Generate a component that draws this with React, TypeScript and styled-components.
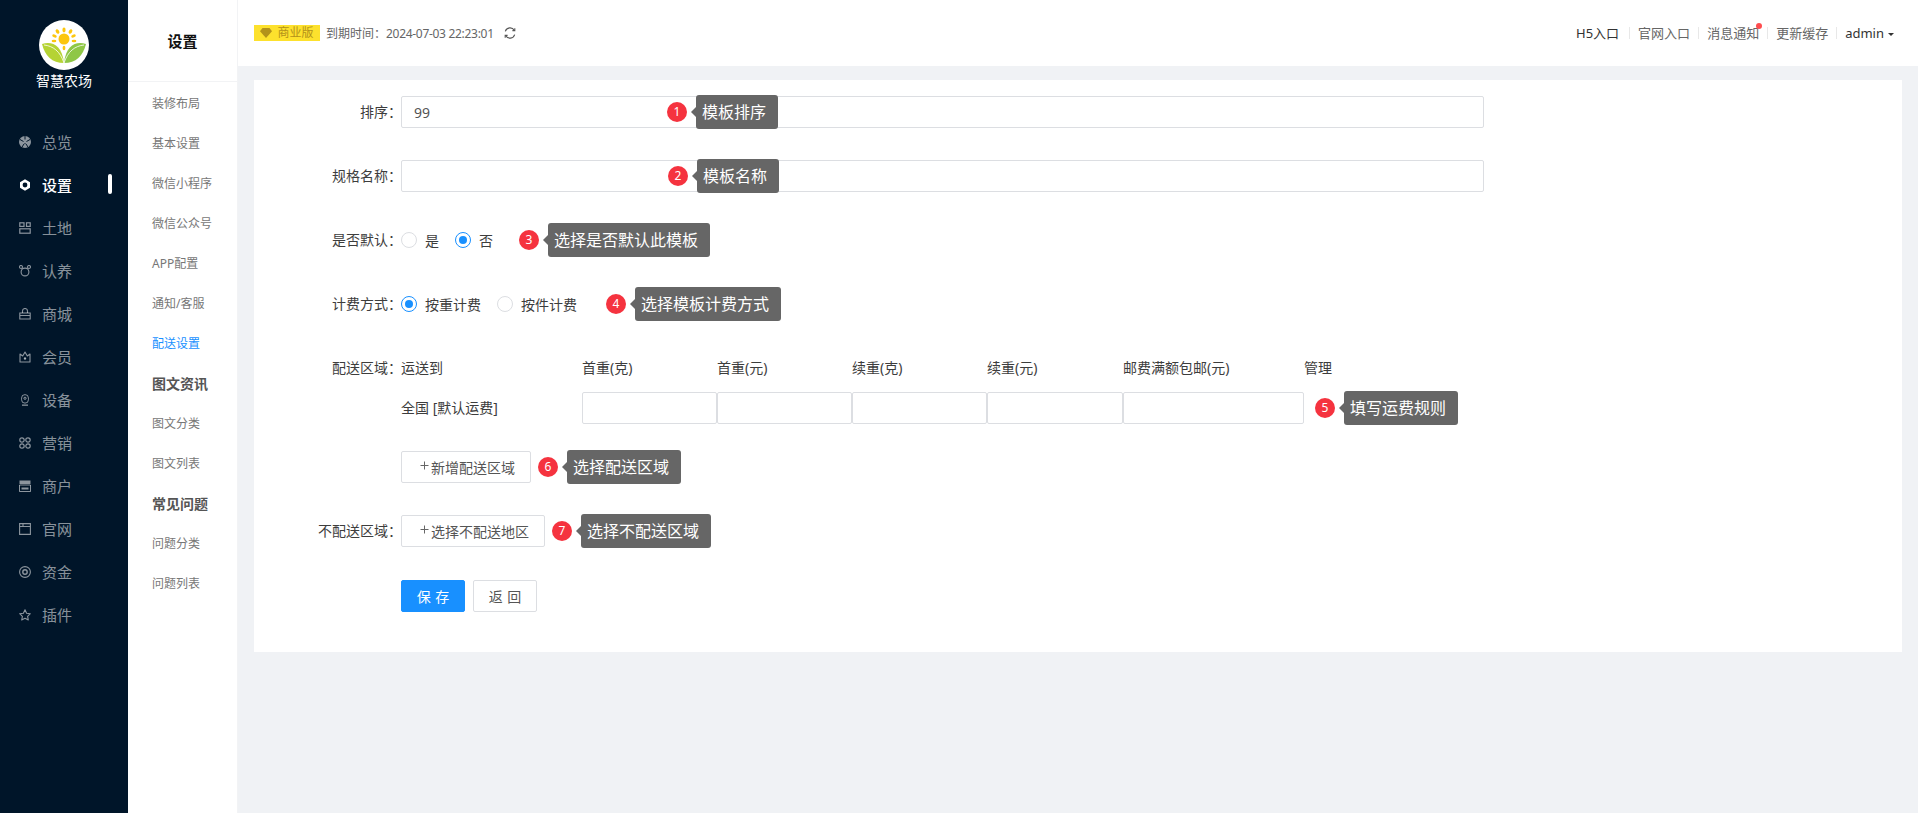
import React from "react";
import styled, { createGlobalStyle } from "styled-components";

const GlobalStyle = createGlobalStyle`
  html, body {
    margin: 0;
    padding: 0;
    height: 100%;
    overflow: hidden;
    background: #f0f2f5;
    font-family: "Noto Sans", "Noto Sans CJK SC", sans-serif;
    font-size: 14px;
    color: #333;
  }
  * {
    box-sizing: border-box;
  }
`;

const Layout = styled.div`
  display: flex;
  width: 1918px;
  height: 813px;
  overflow: hidden;
`;

const Sidebar = styled.aside`
  width: 128px;
  flex: none;
  background: #001529;
`;

const Brand = styled.div`
  display: flex;
  flex-direction: column;
  align-items: center;
  padding-top: 20px;
  height: 120px;
`;

const BrandName = styled.div`
  margin-top: 1px;
  font-size: 14px;
  line-height: 20px;
  color: #fff;
`;

const NavItem = styled.div<{ $active?: boolean }>`
  position: relative;
  display: flex;
  align-items: center;
  gap: 11px;
  height: 43px;
  padding-left: 19px;
  font-size: 15px;
  color: ${(p) => (p.$active ? "#fff" : "rgba(255, 255, 255, 0.55)")};
  font-weight: ${(p) => (p.$active ? 500 : 400)};

  svg {
    width: 12px;
    height: 12px;
    flex: none;
  }

  ${(p) =>
    p.$active &&
    `&::after {
      content: "";
      position: absolute;
      left: 108px;
      top: 11px;
      width: 4px;
      height: 20px;
      border-radius: 2px;
      background: #fff;
    }`}
`;

const SubMenu = styled.aside`
  width: 110px;
  flex: none;
  background: #fff;
  border-right: 1px solid #f2f3f5;
`;

const SubTitle = styled.div`
  height: 82px;
  display: flex;
  align-items: center;
  justify-content: center;
  font-size: 15px;
  font-weight: 700;
  color: #111;
  border-bottom: 1px solid #f2f3f5;
  padding-bottom: 1px;
`;

const SubList = styled.div`
  padding-top: 2px;
`;

const SubItem = styled.div<{ $active?: boolean; $bold?: boolean }>`
  height: 40px;
  line-height: 40px;
  padding-left: 24px;
  font-size: ${(p) => (p.$bold ? "14px" : "12px")};
  font-weight: ${(p) => (p.$bold ? 700 : 400)};
  color: ${(p) => (p.$active ? "#1890ff" : p.$bold ? "#555" : "#777")};
`;

const Main = styled.main`
  flex: 1;
  min-width: 0;
  background: #f0f2f5;
`;

const Header = styled.header`
  height: 66px;
  background: #fff;
  display: flex;
  align-items: center;
  justify-content: space-between;
  padding: 0 24px 0 16px;
`;

const HeaderLeft = styled.div`
  display: flex;
  align-items: center;
  font-size: 12px;
  color: #666;
`;

const PlanTag = styled.span`
  display: inline-flex;
  align-items: center;
  justify-content: center;
  gap: 5px;
  width: 66px;
  height: 16px;
  margin-right: 6px;
  background: #fde12d;
  color: #b3921a;
  font-size: 12px;
  line-height: 16px;

  svg {
    width: 12px;
    height: 10px;
  }
`;

const DateText = styled.span`
  letter-spacing: -0.3px;
`;

const Refresh = styled.svg`
  width: 12px;
  height: 12px;
  margin-left: 10px;
  color: #555;
`;

const HeaderRight = styled.nav`
  display: flex;
  align-items: center;
  font-size: 13px;
  color: #666;
`;

const HeaderLink = styled.span<{ $dark?: boolean; $dot?: boolean }>`
  position: relative;
  line-height: 20px;
  color: ${(p) => (p.$dark ? "#333" : "#666")};

  ${(p) =>
    p.$dot &&
    `&::after {
      content: "";
      position: absolute;
      right: -3px;
      top: 0px;
      width: 6px;
      height: 6px;
      border-radius: 50%;
      background: #ff4d4f;
    }`}
`;

const H5Link = styled(HeaderLink)`
  margin-right: 2px;
`;

const Divider = styled.i`
  display: block;
  width: 1px;
  height: 12px;
  margin: 0 8px;
  background: #e8e8e8;
`;

const Caret = styled.i`
  display: inline-block;
  margin-left: 4px;
  vertical-align: 2px;
  border-style: solid;
  border-width: 3px 3px 0;
  border-color: #333 transparent transparent;
`;

const Card = styled.section`
  margin: 14px 16px 0;
  padding: 16px 0 40px;
  background: #fff;
`;

const FormRow = styled.div<{ $gap?: number }>`
  display: flex;
  align-items: center;
  height: 32px;
  margin-bottom: ${(p) => p.$gap ?? 32}px;
`;

const FeeRow = styled.div`
  display: flex;
  align-items: flex-start;
  margin-bottom: 27px;
`;

const Label = styled.label`
  flex: none;
  width: 148px;
  margin-right: -1px;
  text-align: right;
  font-size: 14px;
  line-height: 20px;
  color: #3d3d3d;
`;

const FeeLabel = styled(Label)`
  padding-top: 6px;
`;

const InputWrap = styled.div`
  position: relative;
  width: 1083px;
`;

const TextInput = styled.div`
  display: flex;
  align-items: center;
  width: 100%;
  height: 32px;
  padding-left: 12px;
  border: 1px solid #dcdee2;
  border-radius: 2px;
  background: #fff;
  font-size: 14px;
  color: #555;
`;

const RadioOption = styled.span`
  display: inline-flex;
  align-items: center;
  gap: 8px;
  margin-right: 16px;
  font-size: 14px;
  color: #3d3d3d;
`;

const RadioDot = styled.i<{ $on?: boolean }>`
  position: relative;
  display: block;
  width: 16px;
  height: 16px;
  border-radius: 50%;
  border: 1px solid ${(p) => (p.$on ? "#1890ff" : "#dcdee2")};
  background: #fff;

  ${(p) =>
    p.$on &&
    `&::after {
      content: "";
      position: absolute;
      left: 3px;
      top: 3px;
      width: 8px;
      height: 8px;
      border-radius: 50%;
      background: #1890ff;
    }`}
`;

const HintWrap = styled.div<{ $left?: number; $over?: number }>`
  display: flex;
  align-items: center;
  gap: 9px;
  margin-left: ${(p) => p.$left ?? 0}px;

  ${(p) =>
    p.$over !== undefined &&
    `position: absolute;
     left: ${p.$over}px;
     top: -1px;
     margin-left: 0;`}
`;

const HintBadge = styled.span`
  width: 20px;
  height: 20px;
  flex: none;
  display: flex;
  align-items: center;
  justify-content: center;
  border-radius: 50%;
  background: #f5333f;
  color: #fff;
  font-size: 12px;
  line-height: 20px;
`;

const HintBubble = styled.span`
  position: relative;
  height: 34px;
  padding: 0 12px 0 6px;
  border-radius: 3px;
  background: #666;
  color: #fff;
  font-size: 16px;
  line-height: 34px;
  white-space: nowrap;

  &::before {
    content: "";
    position: absolute;
    left: -5px;
    top: 12px;
    border-style: solid;
    border-width: 5px 5px 5px 0;
    border-color: transparent #666 transparent transparent;
  }
`;

const FeeTable = styled.div`
  flex: 1;
`;

const FeeHead = styled.div`
  display: flex;
  align-items: center;
  height: 32px;
  margin-bottom: 8px;
`;

const FeeBody = styled.div`
  display: flex;
  align-items: center;
  height: 32px;
`;

const FeeCell = styled.div<{ $w: number }>`
  flex: none;
  width: ${(p) => p.$w}px;
  font-size: 14px;
  line-height: 20px;
  color: #3d3d3d;
`;

const FeeInput = styled.div<{ $w: number }>`
  flex: none;
  width: ${(p) => p.$w}px;
  height: 32px;
  border: 1px solid #dcdee2;
  border-radius: 2px;
  background: #fff;
`;

const Controls = styled.div<{ $gap?: number }>`
  display: flex;
  align-items: center;
  height: 32px;
  padding-left: 147px;
  margin-bottom: ${(p) => p.$gap ?? 0}px;
`;

const OutlineButton = styled.button`
  display: inline-flex;
  align-items: center;
  justify-content: center;
  height: 32px;
  padding: 0 15px 0 18px;
  border: 1px solid #dcdee2;
  border-radius: 2px;
  background: #fff;
  font: inherit;
  font-size: 14px;
  word-spacing: 1px;
  color: #555;
`;

const PrimaryButton = styled(OutlineButton)`
  width: 64px;
  padding: 0;
  border-color: #1890ff;
  background: #1890ff;
  color: #fff;
  margin-right: 8px;
`;

const PlainButton = styled(OutlineButton)`
  width: 64px;
  padding: 0;
`;

const Plus = styled.svg`
  width: 9px;
  height: 9px;
  margin: -3px 2px 0 0;
  color: #666;
`;

const icons: Record<string, React.ReactNode> = {
  overview: (
    <svg viewBox="0 0 12 12">
      <circle cx="6" cy="6" r="6" fill="currentColor" />
      <path d="M1 3.5l3.5 2M11 3.5l-3.5 2M6 0v3.5M3 11l2-3M9 11l-2-3M6 7v1" stroke="#001529" strokeWidth="1" />
    </svg>
  ),
  settings: (
    <svg viewBox="0 0 12 12">
      <path d="M6 0.300l5 2.850v5.700L6 11.700 1 8.850V3.150z" fill="currentColor" />
      <circle cx="6" cy="6" r="2.400" fill="#001529" />
    </svg>
  ),
  land: (
    <svg viewBox="0 0 12 12" fill="none" stroke="currentColor" strokeWidth="1.200">
      <rect x="0.800" y="0.800" width="4.200" height="3.600" />
      <rect x="7.500" y="0.800" width="3.700" height="3.600" />
      <rect x="0.800" y="6.800" width="10.400" height="4.400" />
    </svg>
  ),
  adopt: (
    <svg viewBox="0 0 12 12" fill="none" stroke="currentColor" strokeWidth="1.100">
      <circle cx="6" cy="7" r="3.900" />
      <circle cx="2" cy="2" r="1.500" />
      <circle cx="10" cy="2" r="1.500" />
    </svg>
  ),
  shop: (
    <svg viewBox="0 0 12 12" fill="none" stroke="currentColor" strokeWidth="1.100">
      <path d="M3.500 5V3a2.500 2.500 0 0 1 5 0v2" />
      <path d="M0.800 5h10.400v6H0.800zM0.800 7.500h10.400" />
    </svg>
  ),
  member: (
    <svg viewBox="0 0 12 12" fill="none" stroke="currentColor" strokeWidth="1.100" strokeLinejoin="round">
      <path d="M1 3l2.700 2L6 1l2.300 4L11 3v8H1z" />
      <circle cx="6" cy="7.500" r="0.700" fill="currentColor" />
    </svg>
  ),
  device: (
    <svg viewBox="0 0 12 14" fill="none" stroke="currentColor" strokeWidth="1.100">
      <rect x="2" y="0.700" width="8" height="10" rx="4" />
      <circle cx="6" cy="5" r="1.300" />
      <path d="M2.500 13h7" strokeWidth="1.500" />
    </svg>
  ),
  market: (
    <svg viewBox="0 0 12 12" fill="none" stroke="currentColor" strokeWidth="1.200">
      <circle cx="3" cy="3" r="2.200" />
      <circle cx="9" cy="3" r="2.200" />
      <circle cx="3" cy="9" r="2.200" />
      <circle cx="9" cy="9" r="2.200" />
    </svg>
  ),
  merchant: (
    <svg viewBox="0 0 12 12">
      <path d="M0.500 0.500h11v3.500h-11z" fill="currentColor" />
      <path d="M0.500 5h11v6.500h-11z" fill="none" stroke="currentColor" />
      <path d="M2.500 7.500h7v2h-7z" fill="currentColor" />
    </svg>
  ),
  website: (
    <svg viewBox="0 0 12 12" fill="none" stroke="currentColor" strokeWidth="1.100">
      <path d="M0.600 0.600h10.800v10.800H0.600zM0.600 3.500h10.800M4 0.600v2.900" />
    </svg>
  ),
  funds: (
    <svg viewBox="0 0 12 12" fill="none" stroke="currentColor" strokeWidth="1.100">
      <circle cx="6" cy="6" r="5.400" />
      <circle cx="6" cy="6" r="2.200" strokeWidth="1.400" />
    </svg>
  ),
  plugin: (
    <svg viewBox="0 0 12 12" fill="none" stroke="currentColor" strokeWidth="1.100" strokeLinejoin="round">
      <path d="M6 0.800l1.600 3.400 3.700.5-2.700 2.600.7 3.700L6 9.200l-3.300 1.800.7-3.700L.7 4.700l3.700-.5z" />
    </svg>
  ),
};

const navItems = [
  { key: "overview", label: "总览" },
  { key: "settings", label: "设置", active: true },
  { key: "land", label: "土地" },
  { key: "adopt", label: "认养" },
  { key: "shop", label: "商城" },
  { key: "member", label: "会员" },
  { key: "device", label: "设备" },
  { key: "market", label: "营销" },
  { key: "merchant", label: "商户" },
  { key: "website", label: "官网" },
  { key: "funds", label: "资金" },
  { key: "plugin", label: "插件" },
];

const subItems = [
  { label: "装修布局" },
  { label: "基本设置" },
  { label: "微信小程序" },
  { label: "微信公众号" },
  { label: "APP配置" },
  { label: "通知/客服" },
  { label: "配送设置", active: true },
  { label: "图文资讯", bold: true },
  { label: "图文分类" },
  { label: "图文列表" },
  { label: "常见问题", bold: true },
  { label: "问题分类" },
  { label: "问题列表" },
];

const feeColumns = [
  { title: "首重(克)", width: 135 },
  { title: "首重(元)", width: 135 },
  { title: "续重(克)", width: 135 },
  { title: "续重(元)", width: 136 },
  { title: "邮费满额包邮(元)", width: 181 },
];

const Logo = () => (
  <svg width="50" height="50" viewBox="0 0 50 50">
    <circle cx="25" cy="25" r="25" fill="#fff" />
    <g fill="#fcc60d">
      <circle cx="25" cy="19" r="5.500" />
      <ellipse cx="25" cy="10" rx="1.600" ry="2.400" />
      <ellipse cx="18.500" cy="11.500" rx="1.600" ry="2.400" transform="rotate(-35 18.500 11.500)" />
      <ellipse cx="31.500" cy="11.500" rx="1.600" ry="2.400" transform="rotate(35 31.500 11.500)" />
      <ellipse cx="15.500" cy="16" rx="1.500" ry="2.400" transform="rotate(-65 15.500 16)" />
      <ellipse cx="34.500" cy="16" rx="1.500" ry="2.400" transform="rotate(65 34.500 16)" />
      <ellipse cx="15" cy="21" rx="1.300" ry="2.400" transform="rotate(-90 15 21)" />
      <ellipse cx="35" cy="21" rx="1.300" ry="2.400" transform="rotate(90 35 21)" />
      <ellipse cx="25" cy="28" rx="1.400" ry="2.200" />
    </g>
    <path d="M3 24c10-3 20 1 22 19C13 43 6 36 3 24z" fill="#b5d334" />
    <path d="M47 24c-10-3-20 1-22 19 12 0 19-7 22-19z" fill="#8fc746" />
    <path d="M5 25c9 1 16 6 20 18" fill="none" stroke="#fff" strokeWidth="0.800" />
    <path d="M45 25c-9 1-16 6-20 18" fill="none" stroke="#fff" strokeWidth="0.800" />
  </svg>
);

const PlusIcon = () => (
  <Plus viewBox="0 0 9 9" fill="none" stroke="currentColor" strokeWidth="1">
    <path d="M4.500 0.500v8M0.500 4.500h8" />
  </Plus>
);

const Hint = ({ n, text, left, over }: { n: number; text: string; left?: number; over?: number }) => (
  <HintWrap $left={left} $over={over}>
    <HintBadge>{n}</HintBadge>
    <HintBubble>{text}</HintBubble>
  </HintWrap>
);

const App = () => {
  return (
    <Layout>
      <GlobalStyle />
      <Sidebar>
        <Brand>
          <Logo />
          <BrandName>智慧农场</BrandName>
        </Brand>
        {navItems.map((item) => (
          <NavItem key={item.key} $active={item.active}>
            {icons[item.key]}
            {item.label}
          </NavItem>
        ))}
      </Sidebar>

      <SubMenu>
        <SubTitle>设置</SubTitle>
        <SubList>
          {subItems.map((item) => (
            <SubItem key={item.label} $active={item.active} $bold={item.bold}>
              {item.label}
            </SubItem>
          ))}
        </SubList>
      </SubMenu>

      <Main>
        <Header>
          <HeaderLeft>
            <PlanTag>
              <svg viewBox="0 0 12 10">
                <path d="M2.500 0h7L12 3.200 6 10 0 3.200z" fill="#b3921a" />
              </svg>
              商业版
            </PlanTag>
            到期时间：<DateText>2024-07-03 22:23:01</DateText>
            <Refresh viewBox="0 0 12 12" fill="none" stroke="currentColor" strokeWidth="1.100">
              <path d="M10.300 3.200A5 5 0 0 0 1.300 4.300" />
              <path d="M1.700 8.800a5 5 0 0 0 9-1.100" />
              <path d="M10.800 1.200v2.400H8.400M1.200 10.800V8.400h2.400" />
            </Refresh>
          </HeaderLeft>
          <HeaderRight>
            <H5Link $dark>H5入口</H5Link>
            <Divider />
            <HeaderLink>官网入口</HeaderLink>
            <Divider />
            <HeaderLink $dot>消息通知</HeaderLink>
            <Divider />
            <HeaderLink>更新缓存</HeaderLink>
            <Divider />
            <HeaderLink $dark>
              admin
              <Caret />
            </HeaderLink>
          </HeaderRight>
        </Header>

        <Card>
          <FormRow>
            <Label>排序：</Label>
            <InputWrap>
              <TextInput>99</TextInput>
              <Hint n={1} text="模板排序" over={266} />
            </InputWrap>
          </FormRow>

          <FormRow>
            <Label>规格名称：</Label>
            <InputWrap>
              <TextInput />
              <Hint n={2} text="模板名称" over={267} />
            </InputWrap>
          </FormRow>

          <FormRow>
            <Label>是否默认：</Label>
            <RadioOption>
              <RadioDot />是
            </RadioOption>
            <RadioOption>
              <RadioDot $on />否
            </RadioOption>
            <Hint n={3} text="选择是否默认此模板" left={10} />
          </FormRow>

          <FormRow>
            <Label>计费方式：</Label>
            <RadioOption>
              <RadioDot $on />按重计费
            </RadioOption>
            <RadioOption>
              <RadioDot />按件计费
            </RadioOption>
            <Hint n={4} text="选择模板计费方式" left={13} />
          </FormRow>

          <FeeRow>
            <FeeLabel>配送区域：</FeeLabel>
            <FeeTable>
              <FeeHead>
                <FeeCell $w={181}>运送到</FeeCell>
                {feeColumns.map((col) => (
                  <FeeCell key={col.title} $w={col.width}>
                    {col.title}
                  </FeeCell>
                ))}
                <FeeCell $w={40}>管理</FeeCell>
              </FeeHead>
              <FeeBody>
                <FeeCell $w={181}>全国 [默认运费]</FeeCell>
                {feeColumns.map((col) => (
                  <FeeInput key={col.title} $w={col.width} />
                ))}
                <Hint n={5} text="填写运费规则" left={11} />
              </FeeBody>
            </FeeTable>
          </FeeRow>

          <Controls $gap={32}>
            <OutlineButton>
              <PlusIcon />新增配送区域
            </OutlineButton>
            <Hint n={6} text="选择配送区域" left={7} />
          </Controls>

          <FormRow $gap={33}>
            <Label>不配送区域：</Label>
            <OutlineButton>
              <PlusIcon />选择不配送地区
            </OutlineButton>
            <Hint n={7} text="选择不配送区域" left={7} />
          </FormRow>

          <Controls>
            <PrimaryButton>保 存</PrimaryButton>
            <PlainButton>返 回</PlainButton>
          </Controls>
        </Card>
      </Main>
    </Layout>
  );
};

export default App;
